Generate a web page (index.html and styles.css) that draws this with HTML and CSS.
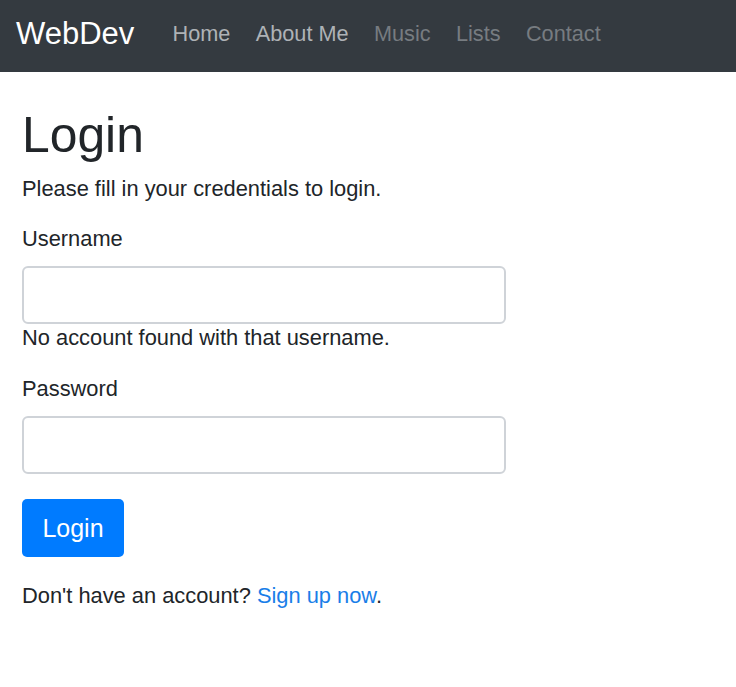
FILE: index.html
```html
<!DOCTYPE html>
<html lang="en">
<head>
<meta charset="utf-8">
<title>Login</title>
<link rel="stylesheet" href="styles.css">
</head>
<body>
<nav class="navbar">
  <a class="brand" href="#">WebDev</a>
  <ul class="nav-links">
    <li><a class="nav-link active" href="#">Home</a></li>
    <li><a class="nav-link active" href="#">About Me</a></li>
    <li><a class="nav-link" href="#">Music</a></li>
    <li><a class="nav-link" href="#">Lists</a></li>
    <li><a class="nav-link" href="#">Contact</a></li>
  </ul>
</nav>
<main class="wrapper">
  <h1 class="title">Login</h1>
  <p class="intro">Please fill in your credentials to login.</p>
  <form class="login-form">
    <div class="form-group">
      <label class="form-label" for="username">Username</label>
      <input class="form-control" type="text" id="username">
      <span class="form-error">No account found with that username.</span>
    </div>
    <div class="form-group form-group-pw">
      <label class="form-label" for="password">Password</label>
      <input class="form-control" type="password" id="password">
    </div>
    <button class="btn-primary" type="submit">Login</button>
    <p class="signup">Don't have an account? <a class="signup-link" href="#">Sign up now</a>.</p>
  </form>
</main>
</body>
</html>
```
FILE: styles.css
```css
* { box-sizing: border-box; }

html, body {
  margin: 0;
  padding: 0;
  background: #ffffff;
}

body {
  font-family: "Liberation Sans", Arial, sans-serif;
  font-size: 21.85px;
  line-height: 32px;
  color: #212529;
}

.navbar {
  height: 72px;
  background: #343a40;
  display: flex;
  align-items: flex-start;
  padding-left: 16px;
}

.brand {
  font-size: 31px;
  line-height: 36px;
  padding-top: 16px;
  color: #ffffff;
  text-decoration: none;
  margin-right: 25.5px;
}

.nav-links {
  list-style: none;
  margin: 0;
  padding: 0;
  display: flex;
  padding-top: 18px;
  font-size: 21.7px;
}

.nav-link {
  display: block;
  padding: 0 12.7px;
  color: #777c81;
  text-decoration: none;
}

.nav-link.active {
  color: #aeb2b6;
}

.wrapper {
  padding: 34px 22px 0 22px;
}

.title {
  font-size: 49.8px;
  line-height: 59px;
  font-weight: 400;
  margin: 0 0 8px 0;
}

.intro {
  margin: 0 0 18px 0;
}

.login-form {
  width: 484px;
}

.form-label {
  display: block;
  margin-bottom: 11px;
}

.form-control {
  display: block;
  width: 484px;
  height: 58px;
  border: 2px solid #cfd3d8;
  border-radius: 6px;
  background: #ffffff;
  padding: 0 16px;
  font-family: inherit;
  font-size: 21.85px;
  margin: 0;
}

.form-group-pw .form-label {
  margin-bottom: 10.5px;
}

.form-error {
  display: block;
  line-height: 22px;
  margin-top: 3px;
}

.form-group-pw {
  margin-top: 24px;
}

.btn-primary {
  display: block;
  margin-top: 25.5px;
  height: 58px;
  width: 102px;
  padding: 0;
  border: none;
  border-radius: 5px;
  background: #007bff;
  color: #ffffff;
  font-family: inherit;
  font-size: 25px;
  line-height: 58px;
  text-align: center;
}

.signup {
  margin: 23px 0 0 0;
}

.signup-link {
  color: #1a7ee8;
  text-decoration: none;
}
```
